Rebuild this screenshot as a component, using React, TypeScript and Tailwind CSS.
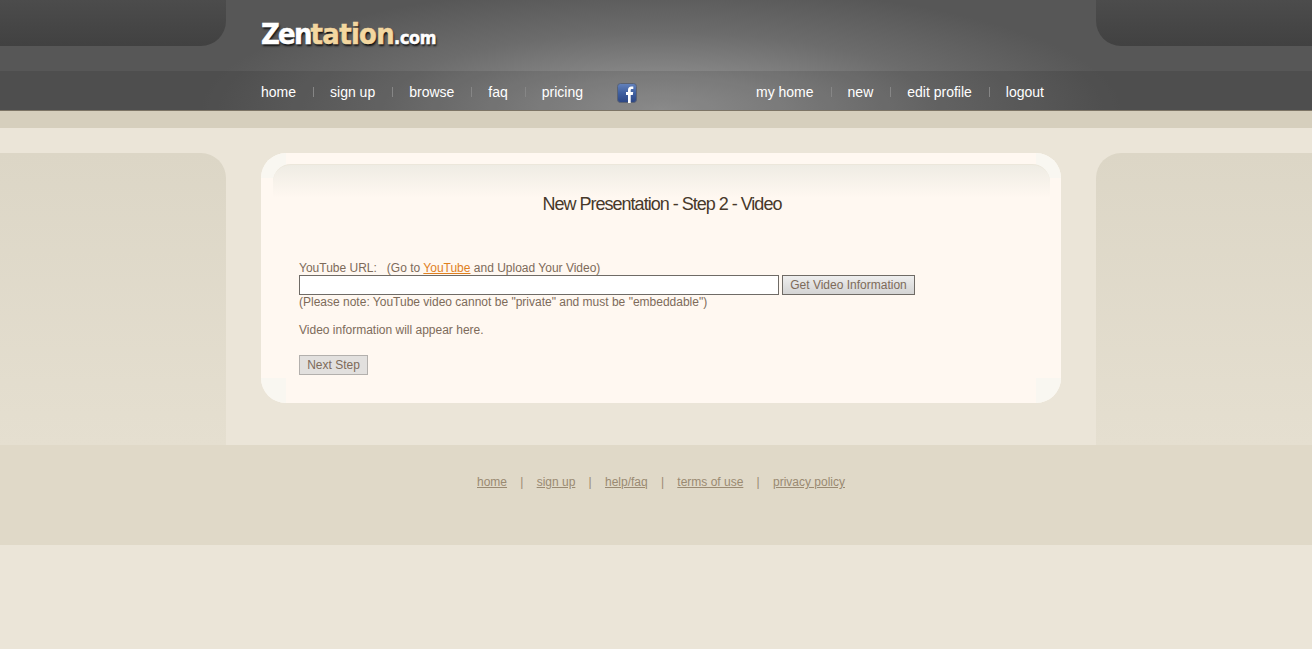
const topNav = ["home", "sign up", "browse", "faq", "pricing"];
const userNav = ["my home", "new", "edit profile", "logout"];
const footerLinks = ["home", "sign up", "help/faq", "terms of use", "privacy policy"];

function NavList({ items }: { items: string[] }) {
  return (
    <ul className="flex h-7 items-center text-sm text-white">
      {items.map((item, idx) => (
        <li key={item} className="flex items-center">
          {idx > 0 && <span className="mr-4 ml-[17px] h-[10px] w-px bg-[#868686]" />}
          <a href="#">{item}</a>
        </li>
      ))}
    </ul>
  );
}

function FacebookIcon() {
  return (
    <svg viewBox="0 0 20 20" className="mt-[5px] ml-[34px] size-5 shrink-0" aria-hidden>
      <defs>
        <linearGradient id="fb" x1="0" y1="0" x2="0" y2="1">
          <stop offset="0" stopColor="#6482bc" />
          <stop offset="0.5" stopColor="#3f5f9f" />
          <stop offset="1" stopColor="#2c4684" />
        </linearGradient>
      </defs>
      <rect x="0.5" y="0.5" width="19" height="19" rx="3" fill="url(#fb)" stroke="#5a6272" />
      <path
        d="M11 20v-8H9V9h2V7c0-2.400 1.300-3.600 3.400-3.600.8 0 1.500 0 1.900.1V6h-1.300c-1 0-1.300.5-1.300 1.300V9h2.500l-.4 3h-2.100v8z"
        fill="#fff"
      />
    </svg>
  );
}

function SidePanel({ className }: { className: string }) {
  return <div className={`h-[292px] w-[226px] bg-gradient-to-b from-[#dcd6c6] to-[#e5dfd0] ${className}`} />;
}

function CardCorner({ className }: { className: string }) {
  return <div className={`pointer-events-none absolute size-[25px] bg-[#f9f7f1] ${className}`} />;
}

export default function App() {
  return (
    <div className="min-h-[649px] w-full overflow-hidden bg-[#ebe5d8] font-['Liberation_Sans',Arial,sans-serif]">
      <header className="h-[111px] w-[1322px] border-b border-[#7d7566] bg-[radial-gradient(ellipse_460px_125px_at_661px_110px,#9a9a9a_0%,#8a8a8a_25%,#6c6c6c_62%,#575757_100%)]">
        <div className="flex h-[71px]">
          <div className="h-[46px] w-[226px] rounded-br-[25px] bg-gradient-to-b from-[#4c4c4c] to-[#414141]" />
          <div className="w-[800px] pl-[35px]">
            <a
              href="#"
              className="mt-[16px] block origin-left scale-y-110 font-['DejaVu_Sans',sans-serif] text-[26px] leading-[36px] font-bold text-white [-webkit-text-stroke:0.5px_currentColor] [text-shadow:1px_2px_2px_#111]"
            >
              <span className="tracking-[-1.8px]">Zen</span>
              <span className="tracking-[-0.7px] text-[#f3d7a0]">tation</span>
              <span className="text-[16px] tracking-[-0.3px]">.com</span>
            </a>
          </div>
          <div className="ml-auto h-[46px] w-[226px] rounded-bl-[25px] bg-gradient-to-b from-[#4c4c4c] to-[#414141]" />
        </div>
        <nav className="flex h-[39px] bg-black/10 pl-[261px]">
          <div className="flex w-[495px] items-start pt-[7px]">
            <NavList items={topNav} />
            <FacebookIcon />
          </div>
          <div className="pt-[7px]">
            <NavList items={userNav} />
          </div>
        </nav>
      </header>

      <div className="h-[17px] bg-[#d6cfbd]" />

      <main className="flex w-[1322px] justify-between pt-[25px]">
        <SidePanel className="rounded-tr-[25px]" />
        <section className="relative h-[250px] w-[800px] overflow-hidden rounded-[25px] bg-[#fff8f1]">
          <CardCorner className="top-0 left-0" />
          <CardCorner className="top-0 right-0" />
          <CardCorner className="bottom-0 left-0" />
          <CardCorner className="right-0 bottom-0" />
          <div className="relative mt-[11px] mr-[11px] ml-3 h-[34px] rounded-t-[18px] border-t border-[#ece7db] bg-gradient-to-b from-[#efece4] to-[#fff8f1]" />
          <h1 className="relative -mt-[8px] pl-[2px] text-center text-lg leading-[28px] tracking-[-1px] text-[#47392a]">
            New Presentation - Step 2 - Video
          </h1>
          <div className="relative px-[38px] pt-[43px] text-xs text-[#7d6b5a]">
            <p className="leading-[14px]">
              YouTube URL: &nbsp; (Go to{" "}
              <a href="#" className="text-[#e0801f] underline">
                YouTube
              </a>{" "}
              and Upload Your Video)
            </p>
            <div className="flex gap-[3px]">
              <input className="h-5 w-[480px] border border-[#6f6b66] bg-white" />
              <button className="h-5 w-[133px] border border-[#6f6b66] bg-gradient-to-b from-[#eeeeee] to-[#d4d4d4] text-xs text-[#7d6b5a]">
                Get Video Information
              </button>
            </div>
            <p className="leading-[14px]">(Please note: YouTube video cannot be "private" and must be "embeddable")</p>
            <p className="mt-[14px] leading-[14px]">Video information will appear here.</p>
            <button className="mt-[18px] block h-5 w-[69px] border border-[#b3b0ad] bg-[#e2e0de] text-xs text-[#7d6b5a]">
              Next Step
            </button>
          </div>
        </section>
        <SidePanel className="rounded-tl-[25px]" />
      </main>

      <footer className="h-[100px] w-[1322px] bg-[#e0d9c8]">
        <ul className="flex justify-center pt-[30px] text-xs leading-[14px] text-[#9a8a72]">
          {footerLinks.map((link, idx) => (
            <li key={link} className="flex">
              {idx > 0 && <span className="mx-[13.25px]">|</span>}
              <a href="#" className="underline">
                {link}
              </a>
            </li>
          ))}
        </ul>
      </footer>
    </div>
  );
}
